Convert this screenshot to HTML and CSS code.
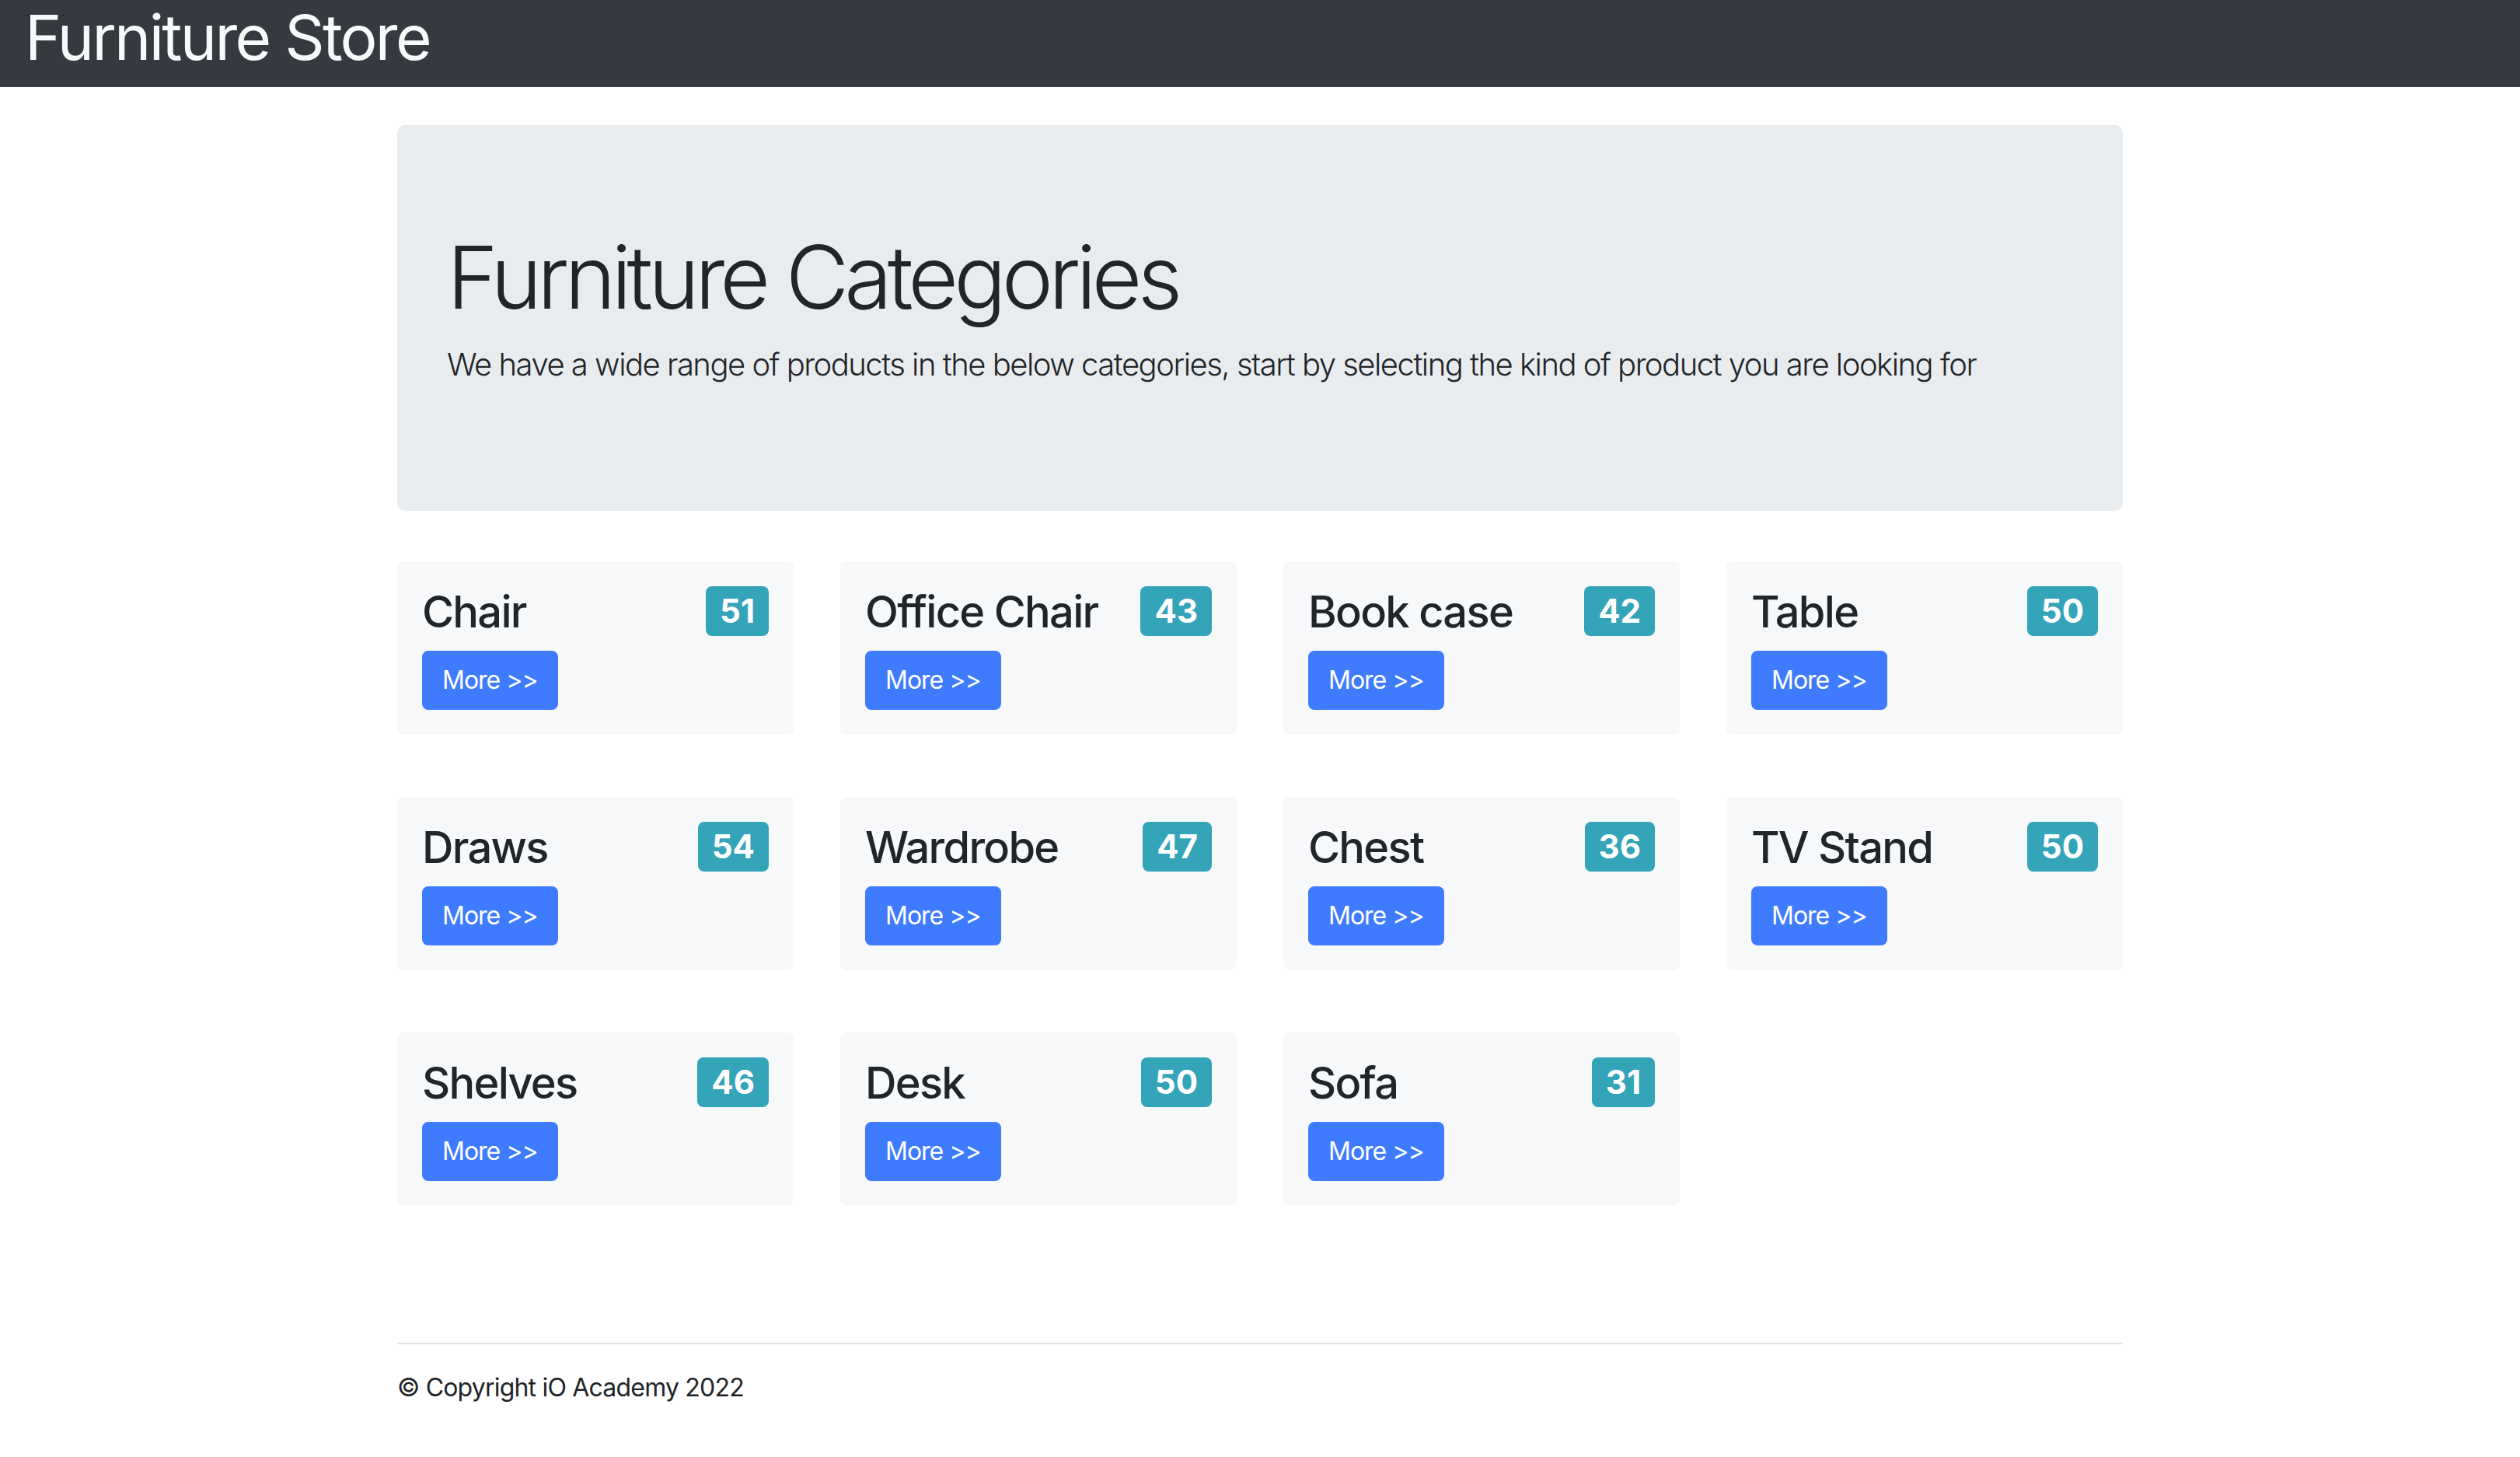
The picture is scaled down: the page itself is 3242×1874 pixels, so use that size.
FILE: index.html
```html
<!DOCTYPE html>
<html lang="en">
<head>
<meta charset="utf-8">
<title>Furniture Store</title>
<link rel="stylesheet" href="styles.css">
</head>
<body>
<nav class="navbar">
  <h1 class="brand">Furniture Store</h1>
</nav>
<main class="container">
  <section class="jumbotron">
    <h1 class="display">Furniture Categories</h1>
    <p class="lead">We have a wide range of products in the below categories, start by selecting the kind of product you are looking for</p>
  </section>
  <section class="grid">
    <div class="card"><div class="card-head"><h3 class="card-title">Chair</h3><span class="badge">51</span></div><a class="btn" href="#">More &gt;&gt;</a></div>
    <div class="card"><div class="card-head"><h3 class="card-title">Office Chair</h3><span class="badge">43</span></div><a class="btn" href="#">More &gt;&gt;</a></div>
    <div class="card"><div class="card-head"><h3 class="card-title">Book case</h3><span class="badge">42</span></div><a class="btn" href="#">More &gt;&gt;</a></div>
    <div class="card"><div class="card-head"><h3 class="card-title">Table</h3><span class="badge">50</span></div><a class="btn" href="#">More &gt;&gt;</a></div>
    <div class="card"><div class="card-head"><h3 class="card-title">Draws</h3><span class="badge">54</span></div><a class="btn" href="#">More &gt;&gt;</a></div>
    <div class="card"><div class="card-head"><h3 class="card-title">Wardrobe</h3><span class="badge">47</span></div><a class="btn" href="#">More &gt;&gt;</a></div>
    <div class="card"><div class="card-head"><h3 class="card-title">Chest</h3><span class="badge">36</span></div><a class="btn" href="#">More &gt;&gt;</a></div>
    <div class="card"><div class="card-head"><h3 class="card-title">TV Stand</h3><span class="badge">50</span></div><a class="btn" href="#">More &gt;&gt;</a></div>
    <div class="card"><div class="card-head"><h3 class="card-title">Shelves</h3><span class="badge">46</span></div><a class="btn" href="#">More &gt;&gt;</a></div>
    <div class="card"><div class="card-head"><h3 class="card-title">Desk</h3><span class="badge">50</span></div><a class="btn" href="#">More &gt;&gt;</a></div>
    <div class="card"><div class="card-head"><h3 class="card-title">Sofa</h3><span class="badge">31</span></div><a class="btn" href="#">More &gt;&gt;</a></div>
  </section>
  <footer class="footer">
    <p class="copy">&copy; Copyright iO Academy 2022</p>
  </footer>
</main>
</body>
</html>
```

FILE: styles.css
```css
* { box-sizing: border-box; }

html, body {
  margin: 0;
  padding: 0;
  background: #ffffff;
}

body {
  font-family: "Inter", "Liberation Sans", sans-serif;
  color: #212529;
}

.navbar {
  background: #343a40;
  height: 112px;
  padding: 0 32px;
  display: flex;
  align-items: flex-start;
}

.brand {
  margin: 0;
  font-size: 80px;
  line-height: 96px;
  font-weight: 400;
  letter-spacing: -2.7px;
  color: #f8f9fa;
}

.container {
  width: 2220px;
  margin: 0 auto;
}

.jumbotron {
  margin-top: 49px;
  margin-bottom: 65px;
  padding: 128px 64px;
  background: #e9ecef;
  border-radius: 10px;
}

.display {
  margin: 0 0 16px;
  font-size: 112px;
  line-height: 134px;
  font-weight: 300;
  letter-spacing: -6px;
}

.lead {
  margin: 0 0 30px;
  font-size: 40px;
  line-height: 60px;
  font-weight: 300;
  letter-spacing: -1.5px;
}

.grid {
  display: grid;
  grid-template-columns: repeat(4, 1fr);
  column-gap: 60px;
  row-gap: 80px;
  margin-bottom: 176px;
}

.card {
  background: #f7f8fa;
  border-radius: 8px;
  padding: 32px;
}

.card-head {
  display: flex;
  justify-content: space-between;
  align-items: flex-start;
  margin-bottom: 16px;
}

.card-title {
  margin: 0;
  font-size: 56px;
  line-height: 67px;
  font-weight: 500;
  letter-spacing: -1.7px;
}

.badge {
  background: #34a4b9;
  color: #ffffff;
  font-size: 42px;
  font-weight: 700;
  line-height: 1;
  padding: 11px 18px;
  border-radius: 8px;
}

.btn {
  display: inline-block;
  background: #3f7bfe;
  border: 2px solid #3f7bfe;
  color: #ffffff;
  text-decoration: none;
  font-size: 32px;
  line-height: 48px;
  padding: 12px 24px;
  border-radius: 8px;
  letter-spacing: -1px;
}

.footer {
  border-top: 2px solid #dee2e6;
  padding-top: 32px;
}

.copy {
  margin: 0;
  font-size: 32px;
  line-height: 48px;
  letter-spacing: -0.8px;
}
```
